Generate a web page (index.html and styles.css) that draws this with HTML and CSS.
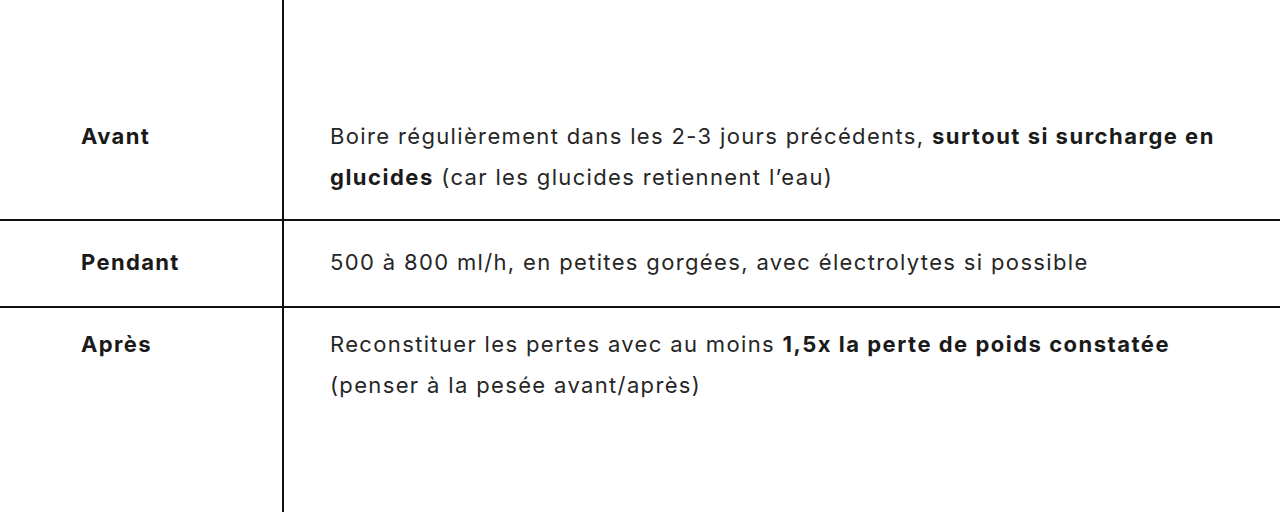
FILE: index.html
```html
<!DOCTYPE html>
<html lang="fr">
<head>
<meta charset="utf-8">
<title>Hydratation</title>
<link rel="stylesheet" href="styles.css">
</head>
<body>
<table class="hydra">
  <tbody>
    <tr class="row row-first">
      <td class="label">Avant</td>
      <td class="desc">Boire régulièrement dans les 2-3 jours précédents, <strong>surtout si surcharge en glucides</strong> (car les glucides retiennent l’eau)</td>
    </tr>
    <tr class="row row-mid">
      <td class="label">Pendant</td>
      <td class="desc">500 à 800 ml/h, en petites gorgées, avec électrolytes si possible</td>
    </tr>
    <tr class="row row-last">
      <td class="label">Après</td>
      <td class="desc">Reconstituer les pertes avec au moins <strong>1,5x la perte de poids constatée</strong> (penser à la pesée avant/après)</td>
    </tr>
  </tbody>
</table>
</body>
</html>
```

FILE: styles.css
```css
html, body {
  margin: 0;
  padding: 0;
  background: #ffffff;
  overflow: hidden;
}

body {
  font-family: Inter, "Noto Sans", "Liberation Sans", sans-serif;
  font-size: 22px;
  line-height: 41px;
  letter-spacing: 1.35px;
  color: #262626;
}

.hydra {
  width: 1280px;
  border-collapse: separate;
  border-spacing: 0;
  table-layout: fixed;
}

.hydra td {
  vertical-align: top;
  padding-top: 21px;
  padding-bottom: 21px;
  border-bottom: 2px solid #111111;
  box-sizing: border-box;
}

.label {
  width: 284px;
  padding-left: 81px;
  padding-right: 16px;
  border-right: 2px solid #111111;
  font-weight: 700;
  color: #1a1a1a;
}

.desc {
  padding-left: 46px;
  padding-right: 42px;
}

.desc strong {
  font-weight: 700;
  letter-spacing: 1.5px;
  color: #1a1a1a;
}

.row-first td {
  padding-top: 116px;
}

.row-mid td {
  padding-bottom: 23px;
}

.row-last td {
  padding-top: 16px;
  padding-bottom: 160px;
  border-bottom: none;
}
```
